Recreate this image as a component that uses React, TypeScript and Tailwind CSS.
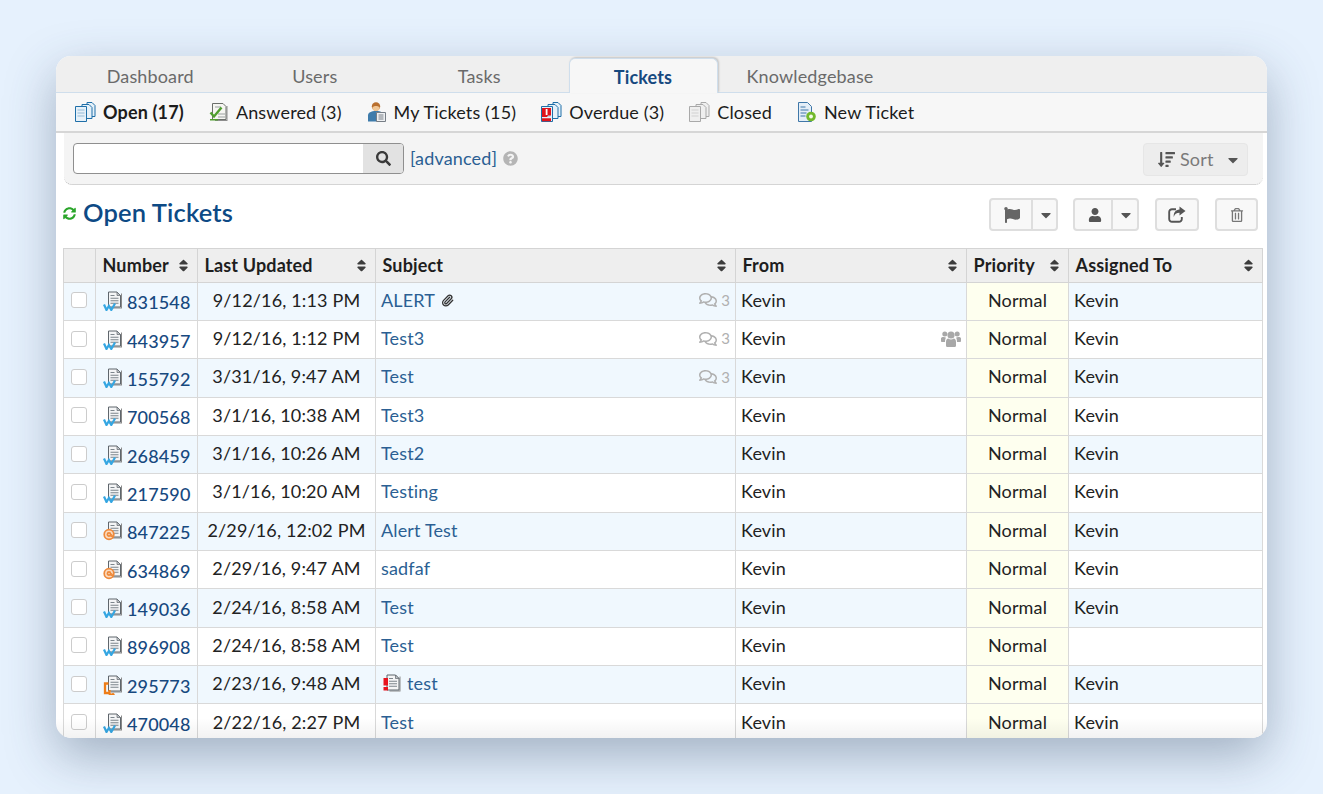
import React from 'react';
import {
  FaCaretDown,
  FaFlag,
  FaQuestionCircle,
  FaRegComments,
  FaRegTrashAlt,
  FaSearch,
  FaSort,
  FaSortAmountDown,
  FaSyncAlt,
  FaUser,
} from 'react-icons/fa';
import { Paperclip } from 'lucide-react';

type Ticket = {
  number: string;
  updated: string;
  subject: string;
  kind?: 'web' | 'email' | 'phone';
  clip?: boolean;
  comments?: boolean;
  group?: boolean;
  flagged?: boolean;
  assigned?: string;
};

const tickets: Ticket[] = [
  { number: '831548', updated: '9/12/16, 1:13 PM', subject: 'ALERT', clip: true, comments: true },
  { number: '443957', updated: '9/12/16, 1:12 PM', subject: 'Test3', comments: true, group: true },
  { number: '155792', updated: '3/31/16, 9:47 AM', subject: 'Test', comments: true },
  { number: '700568', updated: '3/1/16, 10:38 AM', subject: 'Test3' },
  { number: '268459', updated: '3/1/16, 10:26 AM', subject: 'Test2' },
  { number: '217590', updated: '3/1/16, 10:20 AM', subject: 'Testing' },
  { number: '847225', updated: '2/29/16, 12:02 PM', subject: 'Alert Test', kind: 'email' },
  { number: '634869', updated: '2/29/16, 9:47 AM', subject: 'sadfaf', kind: 'email' },
  { number: '149036', updated: '2/24/16, 8:58 AM', subject: 'Test' },
  { number: '896908', updated: '2/24/16, 8:58 AM', subject: 'Test', assigned: '' },
  { number: '295773', updated: '2/23/16, 9:48 AM', subject: 'test', kind: 'phone', flagged: true },
  { number: '470048', updated: '2/22/16, 2:27 PM', subject: 'Test' },
];

const DocSheet = ({ x = 0, y = 0 }) => (
  <g transform={`translate(${x} ${y})`}>
    <path d="M14 2v15H3v-1h10V2z" fill="#8a8a8a" />
    <path d="M.5.5h8.500l3.500 3.500v11.500H.5z" fill="#f4f5f6" stroke="#5f666c" />
    <path d="M9 .5v3.500h3.500z" fill="#c3c8cc" stroke="#5f666c" strokeWidth=".7" />
    <path d="M2.500 4h4M2.500 6.700h8M2.500 9.200h8M2.500 11.700h8" stroke="#7c858c" strokeWidth="1.100" />
  </g>
);

const StackIcon = ({ stroke = '#1f6fa8', fill = '#e6f1f9', alert = false }) => (
  <svg width="21" height="20" viewBox="0 0 21 20" className="shrink-0">
    <path d="M12 .5h5l3 3v11h-8z" fill={fill} stroke={stroke} />
    <path d="M7 2.500h7l3 3v11H7z" fill={fill} stroke={stroke} />
    <path d="M.5 4.500h11v15H.5z" fill={fill} stroke={stroke} />
    <path d="M2.500 8h7M2.500 11h7M2.500 14h7" stroke={stroke} strokeWidth=".8" opacity=".5" />
    {alert && (
      <>
        <path d="M1 6h9v7.500H7L6 15H1z" fill="#e0141c" />
        <path d="M1 16.200h9v3H1z" fill="#e0141c" />
        <path d="M4.700 7h1.800v6H4.700z" fill="#fff" />
      </>
    )}
  </svg>
);

const AnsweredIcon = () => (
  <svg width="20" height="20" viewBox="0 0 20 20" className="shrink-0">
    <path d="M18.500 4v15H6v-1h11.500V4z" fill="#8d8d8d" />
    <path d="M3.500 1.500h10.500l3 3v13h-13.500z" fill="#f6f6f2" stroke="#6b6f6b" />
    <path d="M6 5h6M9 12h7M9 15h7" stroke="#9aa0a0" />
    <path d="M1.500 10.500l3.500 4 7.500-9" fill="none" stroke="#4f9e2e" strokeWidth="2.400" />
    <path d="M1 17.800h8" stroke="#4f9e2e" strokeWidth="1.400" />
  </svg>
);

const MyTicketsIcon = () => (
  <svg width="20" height="20" viewBox="0 0 20 20" className="shrink-0">
    <circle cx="9" cy="4.500" r="4.200" fill="#b96f2e" />
    <path d="M5.500 5.500c1-2 6-2 7 0v1.500c-1 2.500-6 2.500-7 0z" fill="#f1c795" />
    <path d="M1 19.500v-6c0-3 3-4.500 8-4.500s8 1.500 8 4.500v6z" fill="#3f7cab" />
    <path d="M9.500 10.500h9V19.500h-9z" fill="#eef0f2" stroke="#777e86" />
    <path d="M11.500 13h5M11.500 15h5M11.500 17h5" stroke="#7a8088" />
  </svg>
);

const NewTicketIcon = () => (
  <svg width="20" height="20" viewBox="0 0 20 20" className="shrink-0">
    <path d="M1.500.5h9l4 4v15h-13z" fill="#e4eef7" stroke="#3f77a8" />
    <path d="M3.500 5h5M3.500 8h8M3.500 11h6M3.500 14h5" stroke="#3f77a8" />
    <circle cx="14" cy="14.500" r="4.800" fill="#72b92c" />
    <circle cx="14" cy="14.500" r="1.900" fill="#f4fbe9" />
  </svg>
);

const TicketIcon = ({ kind = 'web' }: { kind?: 'web' | 'email' | 'phone' }) => (
  <svg width="20" height="20" viewBox="0 0 20 20" className="shrink-0 -mt-[3px]">
    <DocSheet x={5} y={0.5} />
    {kind === 'web' && (
      <path d="M1 13.500l2.500 5.500 2.400-4 2.400 4 3.700-6.500" fill="none" stroke="#35a6e2" strokeWidth="2.200" />
    )}
    {kind === 'email' && (
      <g fill="none" stroke="#ee8a3c" strokeWidth="1.700">
        <circle cx="6" cy="13.500" r="4.800" fill="#fbdcc1" />
        <circle cx="6" cy="13.500" r="1.600" />
        <path d="M8 13v2c1.500.7 2.500-.3 2.500-1.500" />
      </g>
    )}
    {kind === 'phone' && (
      <path
        d="M5.500 8.500H2v9.500h3.500M6.500 15v3.500c0 1.500 3.500 1.500 4.500 0"
        fill="none"
        stroke="#ee7d18"
        strokeWidth="2.300"
      />
    )}
  </svg>
);

const FlaggedIcon = () => (
  <svg width="19" height="19" viewBox="0 0 19 19" className="shrink-0">
    <DocSheet x={3.500} y={0.500} />
    <path d="M.5 4h4.500v7.500H.5zM.5 13h4.500v3.500H.5z" fill="#e8141f" />
  </svg>
);

const GroupIcon = () => (
  <svg width="20" height="18" viewBox="0 0 20 18" className="shrink-0" fill="#a8a8a8">
    <circle cx="3.800" cy="4" r="2.500" />
    <circle cx="16.200" cy="4" r="2.500" />
    <circle cx="10" cy="5" r="3.600" />
    <path d="M0 8.500c0-1 1-1.500 2.500-1.500 1 0 1.800.2 2.500.7-.7 1-1 2.300-1 4.300H1c-.6 0-1-.5-1-1z" />
    <path d="M20 8.500c0-1-1-1.500-2.500-1.500-1 0-1.800.2-2.500.7.7 1 1 2.300 1 4.300h3c.6 0 1-.5 1-1z" />
    <path d="M5 12c0-2 1-3.500 2.300-3.500.8.700 1.700 1 2.700 1s1.900-.3 2.700-1C14 8.500 15 10 15 12v3.500c0 1-.8 1.500-1.500 1.500h-7C5.800 17 5 16.500 5 15.500z" />
  </svg>
);

const ShareIcon = () => (
  <svg width="18" height="17" viewBox="0 0 18 17" className="shrink-0">
    <path d="M8 3.200H4a2.800 2.800 0 0 0-2.800 2.800v7A2.800 2.800 0 0 0 4 15.800h7a2.800 2.800 0 0 0 2.800-2.800v-2" fill="none" stroke="#555" strokeWidth="1.900" />
    <path d="M11.500.5L17.500 5l-6 4.500V6.800C8.500 6.800 6.500 8 5.800 11c-.5-4.500 1.800-7.200 5.700-7.500z" fill="#555" />
  </svg>
);

const SubNavItem = ({ icon, label, active }: { icon: React.ReactNode; label: string; active?: boolean }) => (
  <a className={`flex items-center gap-[7px] text-[18px] text-[#1c1c1c] ${active ? 'font-bold' : ''}`}>
    {icon}
    <span>{label}</span>
  </a>
);

const Th = ({ label }: { label: string }) => (
  <th className="border border-[#d4d4d4] bg-[#eeeeee] pl-[6.5px] pr-[6px] text-left font-bold text-[18px] text-[#1e1e1e]">
    <div className="flex items-center justify-between">
      <span>{label}</span>
      <FaSort className="text-[#3c3c3c] text-[15px]" />
    </div>
  </th>
);

const IconButton = ({ children, className = '' }: { children: React.ReactNode; className?: string }) => (
  <button
    className={`flex items-center justify-center h-[33px] rounded-[4px] border-2 border-[#dedede] bg-[#f8f8f8] text-[#666] ${className}`}
  >
    {children}
  </button>
);

const tabClass = 'w-[164.5px] pt-[4px] flex items-center justify-center text-[18px] text-[#6a6a6a]';
const cellClass = 'border border-[#d9d9d9] pb-[2px]';

export default function App() {
  return (
    <div className="h-[794px] bg-[#e6f1fd] pt-[56px] px-[56px] overflow-hidden tracking-[0.15px] font-['Lato','Open_Sans',sans-serif]">
      <div className="relative w-[1211px] h-[682px] overflow-hidden rounded-[15px] bg-white shadow-[0_18px_50px_rgba(50,70,100,0.38)]">
        {/* tabs */}
        <div className="flex h-[37px] pl-[12px] bg-[#efefef] border-b border-[#cfdeec]">
          <a className={tabClass}>Dashboard</a>
          <a className={tabClass}>Users</a>
          <a className={tabClass}>Tasks</a>
          <a className="ml-[7px] w-[149px] mt-[2px] h-[35px] pt-[2px] flex items-center justify-center rounded-t-[6px] border border-b-0 border-[#cfdeec] bg-[#f7f7f7] text-[18px] font-bold text-[#17497f] shadow-[1px_-1px_2px_rgba(0,0,0,0.18)]">
            Tickets
          </a>
          <a className="ml-[29px] pt-[4px] flex items-center text-[18px] text-[#6a6a6a]">Knowledgebase</a>
        </div>

        {/* sub nav */}
        <div className="flex items-center gap-[25px] h-[40px] pl-[19px] bg-[#f7f7f7] border-b-2 border-[#d6d6d6]">
          <SubNavItem icon={<StackIcon />} label="Open (17)" active />
          <SubNavItem icon={<AnsweredIcon />} label="Answered (3)" />
          <SubNavItem icon={<MyTicketsIcon />} label="My Tickets (15)" />
          <SubNavItem icon={<StackIcon alert />} label="Overdue (3)" />
          <SubNavItem icon={<StackIcon stroke="#a9a9a9" fill="#efefef" />} label="Closed" />
          <SubNavItem icon={<NewTicketIcon />} label="New Ticket" />
        </div>

        {/* search */}
        <div className="flex items-start justify-between h-[52px] ml-[8px] mr-[4px] pl-[9px] pr-[15px] pt-[10px] bg-[#f4f4f4] rounded-b-[8px] border-b border-dotted border-[#b5b5b5]">
          <div className="flex items-center">
            <div className="flex w-[331px] h-[31px] rounded-[4px] border border-[#8f8f8f] bg-white overflow-hidden">
              <div className="flex-1" />
              <div className="w-[40px] flex items-center justify-center bg-[#e2e2e2]">
                <FaSearch className="text-[15px] text-[#3a3a3a]" />
              </div>
            </div>
            <a className="ml-[6px] text-[18px] text-[#2b5f93]">[advanced]</a>
            <FaQuestionCircle className="ml-[6px] text-[15px] text-[#b5b5b5]" />
          </div>
          <button className="flex items-center w-[105px] h-[33px] pl-[14px] rounded-[4px] border border-[#e6e6e6] bg-[#ededed] text-[18px] text-[#7a7a7a]">
            <FaSortAmountDown className="text-[17px] text-[#555]" />
            <span className="ml-[5px]">Sort</span>
            <FaCaretDown className="ml-[11px] text-[16px] text-[#555]" />
          </button>
        </div>

        {/* title and actions */}
        <div className="flex items-center justify-between h-[63px] pb-[4px] pl-[7px] pr-[9px]">
          <div className="flex items-center gap-[7px] -mt-[3px]">
            <FaSyncAlt className="text-[13px] text-[#2aa52a]" />
            <h1 className="text-[25.5px] font-semibold text-[#0d4a85] leading-none">Open Tickets</h1>
          </div>
          <div className="flex items-center">
            <IconButton className="w-[69px]">
              <span className="flex items-center justify-center w-[39px] h-full border-r-2 border-[#dedede]">
                <FaFlag className="text-[16px] text-[#666]" />
              </span>
              <FaCaretDown className="ml-[5px] text-[16px] text-[#555]" />
            </IconButton>
            <IconButton className="w-[66px] ml-[15px]">
              <span className="flex items-center justify-center w-[35px] h-full border-r-2 border-[#dedede]">
                <FaUser className="text-[14px] text-[#555]" />
              </span>
              <FaCaretDown className="ml-[5px] text-[16px] text-[#555]" />
            </IconButton>
            <IconButton className="w-[44px] ml-[16px]">
              <ShareIcon />
            </IconButton>
            <IconButton className="w-[43px] ml-[16px]">
              <FaRegTrashAlt className="text-[14px] text-[#777]" />
            </IconButton>
          </div>
        </div>

        {/* table */}
        <div className="ml-[7px] mr-[4px]">
          <table className="w-[1199px] table-fixed border-collapse text-[18px]">
            <colgroup>
              <col className="w-[32px]" />
              <col className="w-[102px]" />
              <col className="w-[178px]" />
              <col className="w-[360px]" />
              <col className="w-[231px]" />
              <col className="w-[102px]" />
              <col className="w-[194px]" />
            </colgroup>
            <thead>
              <tr className="h-[33.5px]">
                <th className="border border-[#d4d4d4] bg-[#eeeeee]" />
                <Th label="Number" />
                <Th label="Last Updated" />
                <Th label="Subject" />
                <Th label="From" />
                <Th label="Priority" />
                <Th label="Assigned To" />
              </tr>
            </thead>
            <tbody>
              {tickets.map((t, i) => (
                <tr key={t.number} className={`h-[38.36px] ${i % 2 === 0 ? 'bg-[#f0f8fe]' : 'bg-white'}`}>
                  <td className={cellClass}>
                    <span className="block ml-[7px] w-[16px] h-[16px] rounded-[3px] border border-[#cccccc] bg-white" />
                  </td>
                  <td className={`${cellClass} pl-[7px]`}>
                    <a className="flex items-center gap-[4px] pt-[5px] font-medium text-[#17497f]">
                      <TicketIcon kind={t.kind} />
                      {t.number}
                    </a>
                  </td>
                  <td className={`${cellClass} text-center text-[#222]`}>{t.updated}</td>
                  <td className={`${cellClass} pl-[5px] pr-[5px]`}>
                    <div className="flex items-center">
                      {t.flagged && (
                        <span className="ml-[2px] mr-[5px]">
                          <FlaggedIcon />
                        </span>
                      )}
                      <a className="text-[#2b5f93]">{t.subject}</a>
                      {t.clip && <Paperclip size={13} strokeWidth={2.4} className="ml-[6px] text-[#333]" />}
                      {t.comments && (
                        <span className="ml-auto flex items-center gap-[4px] text-[15px] text-[#b0b0b0]">
                          <FaRegComments className="text-[18px]" />3
                        </span>
                      )}
                    </div>
                  </td>
                  <td className={`${cellClass} pl-[5px] pr-[5px] text-[#222]`}>
                    <div className="flex items-center justify-between">
                      Kevin
                      {t.group && <GroupIcon />}
                    </div>
                  </td>
                  <td className={`${cellClass} bg-[#feffef] text-center text-[#222]`}>Normal</td>
                  <td className={`${cellClass} pl-[5px] text-[#222]`}>{t.assigned ?? 'Kevin'}</td>
                </tr>
              ))}
            </tbody>
          </table>
        </div>

        {/* fade over the last row */}
        <div className="pointer-events-none absolute left-0 right-0 bottom-0 h-[20px] bg-gradient-to-b from-transparent to-[rgba(0,0,0,0.05)]" />
      </div>
    </div>
  );
}
